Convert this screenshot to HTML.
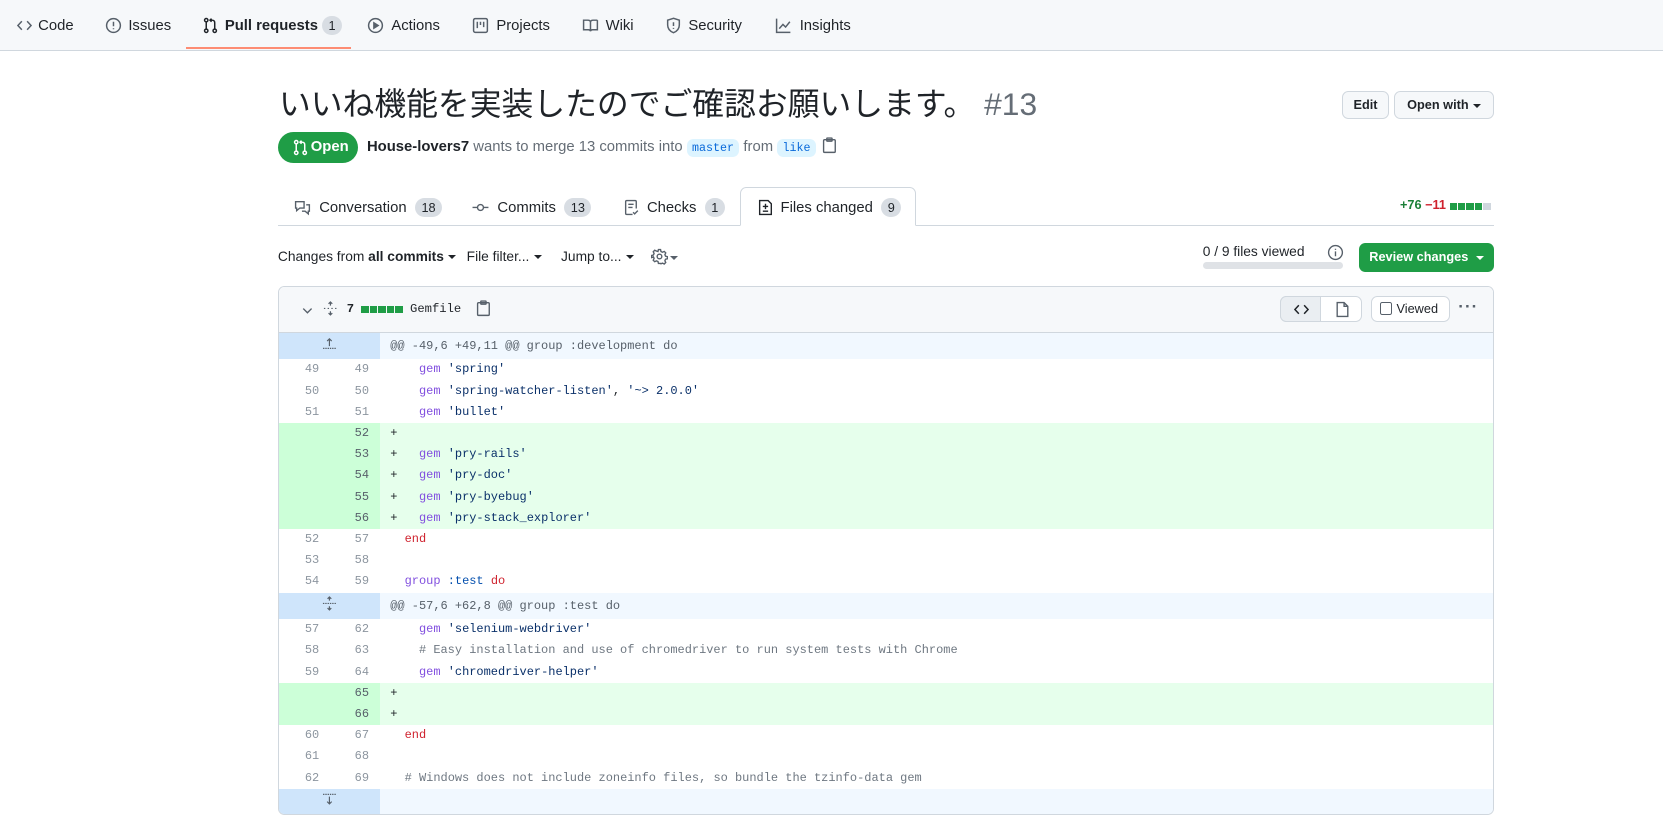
<!DOCTYPE html>
<html><head><meta charset="utf-8">
<style>
html,body{margin:0;padding:0;background:#fff;}
body{zoom:1.0606;width:1568px;height:786px;overflow:hidden;position:relative;font-family:"Liberation Sans","Noto Sans CJK JP",sans-serif;color:#1f2328;font-size:14px;}
.a{position:absolute;white-space:nowrap;}
.nav{position:absolute;left:0;top:0;width:1568px;height:47px;background:#f6f8fa;border-bottom:1px solid #d0d7de;}
.ni{position:absolute;top:0;height:47px;line-height:50px;font-size:14px;color:#1f2328;}
.ni svg{position:absolute;top:16px;}
.cnt{display:inline-block;background:#d8dde3;border-radius:10px;font-size:12px;line-height:18px;padding:0 6px;margin-left:4px;color:#1f2328;}
.btn{position:absolute;border:1px solid #d0d7de;background:#f6f8fa;border-radius:6px;font-size:12px;font-weight:bold;text-align:center;box-sizing:border-box;}
.mono{font-family:"Liberation Mono",monospace;}
.tab{position:absolute;top:177px;height:36px;line-height:38px;font-size:14px;}
.tab svg{position:absolute;top:11px;}
.caret{display:inline-block;width:0;height:0;border-left:4px solid transparent;border-right:4px solid transparent;border-top:4px solid currentColor;vertical-align:middle;margin-left:4px;}
.file{position:absolute;left:262px;top:270px;width:1145px;height:497px;border:1px solid #d0d7de;border-radius:6px;overflow:hidden;}
.fh{height:42px;background:#f6f8fa;border-bottom:1px solid #d0d7de;position:relative;}
.row{display:flex;height:20px;line-height:20px;font-family:"Liberation Mono",monospace;font-size:11.3px;}
.row .n{width:48px;box-sizing:border-box;text-align:right;padding-right:10px;color:#8c959f;}
.row .n2{width:47px;}
.row .c{flex:1;padding-left:10px;white-space:pre;color:#1f2328;}
.add .n{background:#ccffd8;color:#57606a;}
.add .c{background:#e6ffec;}
.hk{height:25px;line-height:25px;}
.hk .n{background:#ddf4ff;width:95px;padding:0;text-align:center;color:#57606a;}
.hk .c{background:#f1f8ff;color:#57606a;}
.k{color:#8250df}.s{color:#0a3069}.r{color:#cf222e}.cm{color:#6e7781}.sy{color:#0550ae}
</style></head><body>

<div class="nav">
  <div class="ni" style="left:15px"><svg width="16" height="16" viewBox="0 0 16 16" fill="none" stroke="#57606a" stroke-width="1.4"><path d="M5.5 4 1.8 8l3.7 4M10.5 4l3.7 4-3.7 4"/></svg><span style="margin-left:21px">Code</span></div>
  <div class="ni" style="left:99px"><svg width="16" height="16" viewBox="0 0 16 16" fill="none" stroke="#57606a" stroke-width="1.4"><circle cx="8" cy="8" r="6.5"/><path d="M8 4.5v4.2M8 10.6v1"/></svg><span style="margin-left:22px">Issues</span></div>
  <div class="ni" style="left:190px;font-weight:bold"><svg width="16" height="16" viewBox="0 0 16 16" fill="none" stroke="#1f2328" stroke-width="1.4"><circle cx="4" cy="3" r="1.6"/><circle cx="4" cy="13" r="1.6"/><circle cx="12" cy="13" r="1.6"/><path d="M4 4.6v6.8M12 11.4V5.5Q12 3 9.5 3H7.5M9 1.5 7.5 3 9 4.5"/></svg><span style="margin-left:22px">Pull requests</span><span class="cnt" style="font-weight:normal">1</span></div>
  <div style="position:absolute;left:175px;top:44px;width:156px;height:2px;background:#fd8c73"></div>
  <div class="ni" style="left:346px"><svg width="16" height="16" viewBox="0 0 16 16" fill="none" stroke="#57606a" stroke-width="1.4"><circle cx="8" cy="8" r="6.5"/><path d="M6.5 5.5v5l4-2.5z" fill="#57606a"/></svg><span style="margin-left:23px">Actions</span></div>
  <div class="ni" style="left:445px"><svg width="16" height="16" viewBox="0 0 16 16" fill="none" stroke="#57606a" stroke-width="1.4"><rect x="1.5" y="1.5" width="13" height="13" rx="1.5"/><path d="M5 4.5v6M8 4.5v3M11 4.5v5"/></svg><span style="margin-left:23px">Projects</span></div>
  <div class="ni" style="left:549px"><svg width="16" height="16" viewBox="0 0 16 16" fill="none" stroke="#57606a" stroke-width="1.4"><path d="M1.5 3h4Q8 3 8 5v8.5Q8 12 6 12H1.5zM14.5 3h-4Q8 3 8 5M14.5 3v9H10q-2 0-2 1.5"/></svg><span style="margin-left:22px">Wiki</span></div>
  <div class="ni" style="left:627px"><svg width="16" height="16" viewBox="0 0 16 16" fill="none" stroke="#57606a" stroke-width="1.4"><path d="M8 1.2 2.5 3v4.5Q2.5 12.5 8 14.8 13.5 12.5 13.5 7.5V3z"/><path d="M8 5v3.5M8 10.2v1"/></svg><span style="margin-left:22px">Security</span></div>
  <div class="ni" style="left:731px"><svg width="16" height="16" viewBox="0 0 16 16" fill="none" stroke="#57606a" stroke-width="1.4"><path d="M1.5 1.5v13h13M4 11l3.5-4 2.5 2.5 4-5"/></svg><span style="margin-left:23px">Insights</span></div>
</div>

<div class="a" style="left:263px;top:77px;font-size:30px;line-height:42px;font-weight:normal">いいね機能を実装したのでご確認お願いします。 <span style="color:#656d76;font-family:'Liberation Sans',sans-serif">#13</span></div>
<div class="btn" style="left:1265px;top:86px;width:45px;height:26px;line-height:24px">Edit</div>
<div class="btn" style="left:1314px;top:86px;width:95px;height:26px;line-height:24px">Open with<span class="caret"></span></div>

<div class="a" style="left:262px;top:124px;width:76px;height:30px;border-radius:15px;background:#1f9d46;color:#fff;font-weight:bold;line-height:30px;font-size:14px"><svg style="position:absolute;left:13px;top:7px" width="16" height="16" viewBox="0 0 16 16" fill="none" stroke="#fff" stroke-width="1.4"><circle cx="4" cy="3" r="1.6"/><circle cx="4" cy="13" r="1.6"/><circle cx="12" cy="13" r="1.6"/><path d="M4 4.6v6.8M12 11.4V5.5Q12 3 9.5 3H7.5M9 1.5 7.5 3 9 4.5"/></svg><span style="margin-left:31px">Open</span></div>
<div class="a" style="left:346px;top:129px;font-size:14px;color:#656d76;line-height:20px"><b style="color:#1f2328">House-lovers7</b> wants to merge 13 commits into <span class="mono" style="background:#ddf4ff;color:#0969da;font-size:11px;padding:2px 5px;border-radius:6px">master</span> from <span class="mono" style="background:#ddf4ff;color:#0969da;font-size:11px;padding:2px 5px;border-radius:6px">like</span> <svg style="vertical-align:-3px;margin-left:2px" width="14" height="16" viewBox="0 0 14 16" fill="none" stroke="#57606a" stroke-width="1.3"><rect x="1.5" y="2.5" width="11" height="12" rx="1"/><rect x="4.5" y="1" width="5" height="3" rx=".5"/></svg></div>

<div class="a" style="left:262px;top:212px;width:1147px;height:1px;background:#d0d7de"></div>
<div class="tab" style="left:276px;"><svg style="left:1px" width="16" height="16" viewBox="0 0 16 16" fill="none" stroke="#57606a" stroke-width="1.3"><path d="M1.5 2.5h8v6h-4l-3 2.5V8.5h-1zM11.5 5.5h3v6h-1v2.5l-3-2.5h-3"/></svg><span style="margin-left:25px">Conversation</span><span class="cnt" style="margin-left:8px">18</span></div>
<div class="tab" style="left:445px;"><svg style="left:0" width="16" height="16" viewBox="0 0 16 16" fill="none" stroke="#57606a" stroke-width="1.3"><circle cx="8" cy="8" r="2.8"/><path d="M0.5 8h4.7M10.8 8h4.7"/></svg><span style="margin-left:24px">Commits</span><span class="cnt" style="margin-left:8px">13</span></div>
<div class="tab" style="left:587px;"><svg style="left:0" width="16" height="16" viewBox="0 0 16 16" fill="none" stroke="#57606a" stroke-width="1.3"><path d="M9 14.5H3.5q-1 0-1-1v-11q0-1 1-1h8q1 0 1 1V9M5 5h5M5 8h4M9.5 12.5l1.5 1.5 3-3"/></svg><span style="margin-left:23px">Checks</span><span class="cnt" style="margin-left:8px">1</span></div>
<div class="tab" style="left:698px;top:176px;width:166px;height:37px;border:1px solid #d0d7de;border-bottom:1px solid #fff;border-radius:6px 6px 0 0;background:#fff;box-sizing:border-box"><svg style="left:15px" width="16" height="16" viewBox="0 0 16 16" fill="none" stroke="#1f2328" stroke-width="1.3"><path d="M2.5 1.5h8l3 3v10h-11z"/><path d="M8 4.5v5M5.5 7h5M5.5 11.5h5"/></svg><span style="margin-left:37px">Files changed</span><span class="cnt" style="margin-left:8px">9</span></div>
<div class="a" style="left:1320px;top:186px;font-size:12px;font-weight:bold;line-height:16px"><span style="color:#1a7f37">+76</span> <span style="color:#cf222e">−11</span> <span style="display:inline-block;vertical-align:-1px"><span style="display:inline-block;width:7px;height:7px;background:#1f9d46;margin-right:1px"></span><span style="display:inline-block;width:7px;height:7px;background:#1f9d46;margin-right:1px"></span><span style="display:inline-block;width:7px;height:7px;background:#1f9d46;margin-right:1px"></span><span style="display:inline-block;width:7px;height:7px;background:#1f9d46;margin-right:1px"></span><span style="display:inline-block;width:7px;height:7px;background:#d0d7de"></span></span></div>

<div class="a" style="left:262px;top:233px;font-size:13px;line-height:18px;color:#1f2328">Changes from <b>all commits</b><span class="caret"></span></div>
<div class="a" style="left:440px;top:233px;font-size:13px;line-height:18px;color:#1f2328">File filter...<span class="caret"></span></div>
<div class="a" style="left:529px;top:233px;font-size:13px;line-height:18px;color:#1f2328">Jump to...<span class="caret"></span></div>
<div class="a" style="left:614px;top:234px;font-size:13px;color:#57606a"><svg width="16" height="16" viewBox="0 0 16 16" fill="none" stroke="#57606a" stroke-width="1.3" style="vertical-align:-3px"><circle cx="8" cy="8" r="2.2"/><path d="M7 1.5h2l.4 1.8 1.4.7 1.7-.8 1.4 1.4-.8 1.7.6 1.4 1.8.5v2l-1.8.4-.6 1.4.8 1.7-1.4 1.4-1.7-.8-1.4.6L9 14.5H7l-.4-1.8-1.4-.6-1.7.8-1.4-1.4.8-1.7-.6-1.4L.5 9V7l1.8-.4.6-1.4-.8-1.7 1.4-1.4 1.7.8L6.6 3.3z"/></svg><span class="caret" style="margin-left:2px"></span></div>

<div class="a" style="left:1134px;top:230px;font-size:13px;line-height:16px">0 / 9 files viewed</div>
<div class="a" style="left:1134px;top:247px;width:132px;height:7px;border-radius:4px;background:#dfe2e6"></div>
<svg class="a" style="left:1251px;top:230px" width="16" height="16" viewBox="0 0 16 16" fill="none" stroke="#57606a" stroke-width="1.3"><circle cx="8" cy="8" r="6.5"/><path d="M8 7v4.5M8 4.5v1"/></svg>
<div class="a" style="left:1281px;top:229px;width:128px;height:27px;border-radius:6px;background:#1f9d46;color:#fff;font-size:12px;font-weight:bold;line-height:27px;text-align:center">Review changes<span class="caret" style="margin-left:7px"></span></div>

<div class="file">
  <div class="fh">
    <svg class="a" style="left:20px;top:15px" width="14" height="14" viewBox="0 0 16 16" fill="none" stroke="#57606a" stroke-width="1.5"><path d="M3.5 6 8 10.5 12.5 6"/></svg>
    <svg class="a" style="left:42px;top:13px" width="14" height="14" viewBox="0 0 16 16" fill="none" stroke="#57606a" stroke-width="1.3"><path d="M8 1v4M6 3l2-2 2 2M8 15v-4M6 13l2 2 2-2" /><path d="M1 8h2M5 8h2M9 8h2M13 8h2" stroke-dasharray="1.5 1"/></svg>
    <div class="a mono" style="left:64px;top:12px;font-size:11.5px;line-height:18px;font-weight:bold">7 <span style="display:inline-block;vertical-align:-1px;font-size:0"><span style="display:inline-block;width:7px;height:7px;background:#1f9d46;margin-right:1px"></span><span style="display:inline-block;width:7px;height:7px;background:#1f9d46;margin-right:1px"></span><span style="display:inline-block;width:7px;height:7px;background:#1f9d46;margin-right:1px"></span><span style="display:inline-block;width:7px;height:7px;background:#1f9d46;margin-right:1px"></span><span style="display:inline-block;width:7px;height:7px;background:#1f9d46"></span></span> <span style="font-weight:normal;color:#1f2328">Gemfile</span></div>
    <svg class="a" style="left:186px;top:12px" width="14" height="16" viewBox="0 0 14 16" fill="none" stroke="#57606a" stroke-width="1.3"><rect x="1.5" y="2.5" width="11" height="12" rx="1"/><rect x="4.5" y="1" width="5" height="3" rx=".5"/></svg>
    <div class="a" style="left:944px;top:8px;width:77px;height:25px;border:1px solid #d0d7de;border-radius:6px;box-sizing:border-box;background:#fff"></div>
    <div class="a" style="left:944px;top:8px;width:39px;height:25px;border:1px solid #d0d7de;border-radius:6px 0 0 6px;box-sizing:border-box;background:#eaeef2"></div>
    <svg class="a" style="left:956px;top:13px" width="16" height="16" viewBox="0 0 16 16" fill="none" stroke="#1f2328" stroke-width="1.4"><path d="M5.5 4 1.8 8l3.7 4M10.5 4l3.7 4-3.7 4"/></svg>
    <svg class="a" style="left:995px;top:13px" width="16" height="16" viewBox="0 0 16 16" fill="none" stroke="#57606a" stroke-width="1.3"><path d="M3 1.5h6.5l3.5 3.5v9.5H3zM9.5 1.5V5H13"/></svg>
    <div class="a" style="left:1030px;top:8px;width:74px;height:25px;border:1px solid #d0d7de;border-radius:6px;box-sizing:border-box;background:#fff;font-size:12px;line-height:23px;color:#1f2328"><span style="display:inline-block;width:10px;height:10px;border:1px solid #57606a;border-radius:2px;vertical-align:-2px;margin:0 4px 0 7px"></span>Viewed</div>
    <div class="a" style="left:1112px;top:9px;font-size:16px;font-weight:bold;color:#57606a;letter-spacing:1px">···</div>
  </div>
  <div class="row hk"><div class="n" style="background:#cfe5fb"><svg width="14" height="12" viewBox="0 0 16 14" fill="none" stroke="#57606a" stroke-width="1.3" style="vertical-align:-1px"><path d="M8 10V2M5.5 4.5 8 2l2.5 2.5"/><path d="M1 12.5h14" stroke-dasharray="1.5 1"/></svg></div><div class="c">@@ -49,6 +49,11 @@ group :development do</div></div>
  <div class="row"><div class="n">49</div><div class="n n2">49</div><div class="c">    <span class="k">gem</span> <span class="s">'spring'</span></div></div>
  <div class="row"><div class="n">50</div><div class="n n2">50</div><div class="c">    <span class="k">gem</span> <span class="s">'spring-watcher-listen'</span>, <span class="s">'~&gt; 2.0.0'</span></div></div>
  <div class="row"><div class="n">51</div><div class="n n2">51</div><div class="c">    <span class="k">gem</span> <span class="s">'bullet'</span></div></div>
  <div class="row add"><div class="n"></div><div class="n n2">52</div><div class="c">+</div></div>
  <div class="row add"><div class="n"></div><div class="n n2">53</div><div class="c">+   <span class="k">gem</span> <span class="s">'pry-rails'</span></div></div>
  <div class="row add"><div class="n"></div><div class="n n2">54</div><div class="c">+   <span class="k">gem</span> <span class="s">'pry-doc'</span></div></div>
  <div class="row add"><div class="n"></div><div class="n n2">55</div><div class="c">+   <span class="k">gem</span> <span class="s">'pry-byebug'</span></div></div>
  <div class="row add"><div class="n"></div><div class="n n2">56</div><div class="c">+   <span class="k">gem</span> <span class="s">'pry-stack_explorer'</span></div></div>
  <div class="row"><div class="n">52</div><div class="n n2">57</div><div class="c">  <span class="r">end</span></div></div>
  <div class="row"><div class="n">53</div><div class="n n2">58</div><div class="c"> </div></div>
  <div class="row"><div class="n">54</div><div class="n n2">59</div><div class="c">  <span class="k">group</span> <span class="sy">:test</span> <span class="r">do</span></div></div>
  <div class="row hk"><div class="n" style="background:#cfe5fb"><svg width="14" height="14" viewBox="0 0 16 16" fill="none" stroke="#57606a" stroke-width="1.3" style="vertical-align:-2px"><path d="M8 1v4M6 3l2-2 2 2M8 15v-4M6 13l2 2 2-2"/><path d="M1 8h14" stroke-dasharray="1.5 1"/></svg></div><div class="c">@@ -57,6 +62,8 @@ group :test do</div></div>
  <div class="row"><div class="n">57</div><div class="n n2">62</div><div class="c">    <span class="k">gem</span> <span class="s">'selenium-webdriver'</span></div></div>
  <div class="row"><div class="n">58</div><div class="n n2">63</div><div class="c">    <span class="cm"># Easy installation and use of chromedriver to run system tests with Chrome</span></div></div>
  <div class="row"><div class="n">59</div><div class="n n2">64</div><div class="c">    <span class="k">gem</span> <span class="s">'chromedriver-helper'</span></div></div>
  <div class="row add"><div class="n"></div><div class="n n2">65</div><div class="c">+</div></div>
  <div class="row add"><div class="n"></div><div class="n n2">66</div><div class="c">+</div></div>
  <div class="row"><div class="n">60</div><div class="n n2">67</div><div class="c">  <span class="r">end</span></div></div>
  <div class="row"><div class="n">61</div><div class="n n2">68</div><div class="c"> </div></div>
  <div class="row"><div class="n">62</div><div class="n n2">69</div><div class="c">  <span class="cm"># Windows does not include zoneinfo files, so bundle the tzinfo-data gem</span></div></div>
  <div class="row hk" style="height:26px"><div class="n" style="background:#cfe5fb"><svg width="14" height="12" viewBox="0 0 16 14" fill="none" stroke="#57606a" stroke-width="1.3" style="vertical-align:-1px"><path d="M1 1.5h14" stroke-dasharray="1.5 1"/><path d="M8 4v8M5.5 9.5 8 12l2.5-2.5"/></svg></div><div class="c"></div></div>
</div>
</body></html>
